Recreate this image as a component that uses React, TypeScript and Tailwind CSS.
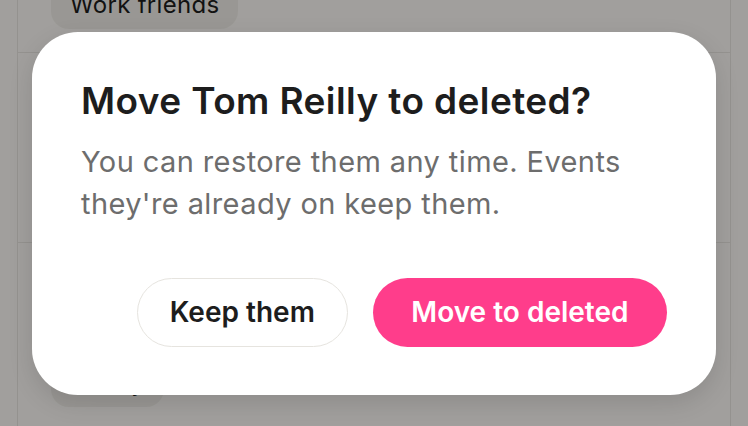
import React from 'react';

const Chip: React.FC<{ label: string }> = ({ label }) => (
  <span className="inline-flex rounded-[18px] bg-[#ece9e3] px-[19px] py-[8px] text-[24px] leading-[32px] tracking-[0.3px] text-[#1c1c1c]">
    {label}
  </span>
);

export default function App() {
  return (
    <div className="relative h-[426px] w-[748px] overflow-hidden bg-[#f7f5f1] font-['Inter',sans-serif]">
      {/* page underneath the dialog */}
      <div className="mx-[17px] -mt-[19px] h-[460px] border-x border-[#e4e1dc]">
        <div className="border-b border-[#e4e1dc] pb-[23px] pl-[33px]">
          <Chip label="Work friends" />
        </div>
        <div className="h-[190px] border-b border-[#e4e1dc]" />
        <div className="pl-[33px] pt-[116px]">
          <Chip label="Family" />
        </div>
      </div>

      {/* overlay + dialog */}
      <div className="absolute inset-0 flex items-center justify-center bg-black/35">
        <div className="w-[684px] rounded-[46px] bg-white px-[49px] pb-[48px] pt-[47px] shadow-[0_8px_24px_rgba(0,0,0,0.12)]">
          <h2 className="text-[37px] font-semibold leading-[44px] tracking-[0.4px] text-[#1d1d1d]">
            Move Tom Reilly to deleted?
          </h2>
          <p className="mt-[18px] text-[29px] leading-[42px] tracking-[0.4px] text-[#6d6d6d]">
            You can restore them any time. Events they're already on keep them.
          </p>
          <div className="mt-[53px] flex justify-end gap-[25px]">
            <button className="h-[69px] rounded-full border-[1.5px] border-[#e6e4df] bg-white px-[32px] text-[28px] font-semibold text-[#1d1d1d]">
              Keep them
            </button>
            <button className="h-[69px] rounded-full bg-[#ff3d8b] px-[38.5px] text-[28px] font-semibold text-white">
              Move to deleted
            </button>
          </div>
        </div>
      </div>
    </div>
  );
}
